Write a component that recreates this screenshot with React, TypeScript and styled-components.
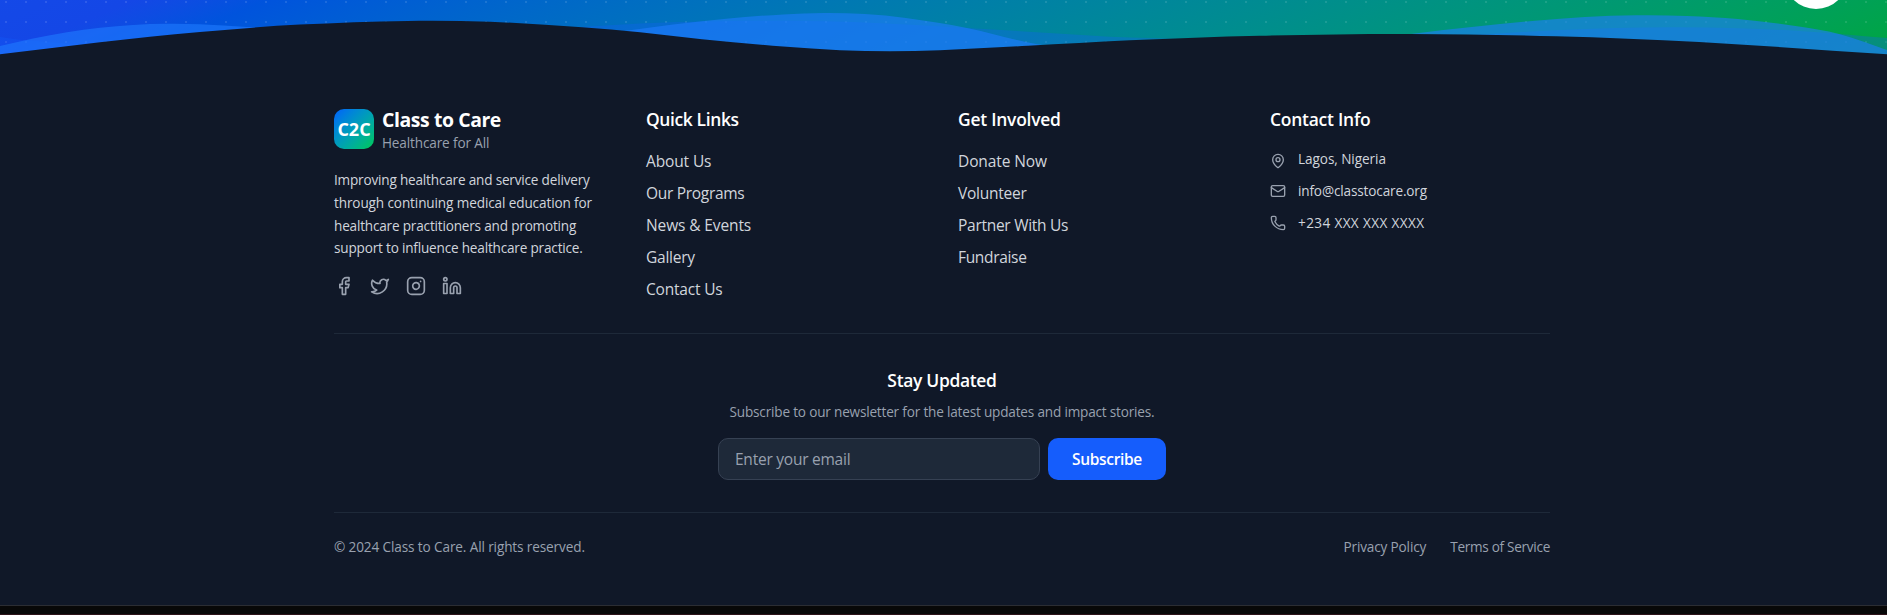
import React from "react";
import styled, { createGlobalStyle } from "styled-components";
import { Facebook, Twitter, Instagram, Linkedin, MapPin, Mail, Phone } from "lucide-react";

const GlobalStyle = createGlobalStyle`
  *, *::before, *::after { box-sizing: border-box; }
  body {
    margin: 0;
    background: #0a0a0a;
    font-family: "Segoe UI", "Open Sans", "Noto Sans", sans-serif;
    font-size: 16px;
    line-height: 24px;
    color: #fff;
    overflow: hidden;
  }
  h3, p, ul { margin: 0; padding: 0; }
  ul { list-style: none; }
  a { color: inherit; text-decoration: none; }
`;

const Page = styled.div`
  height: 615px;
  display: flex;
  flex-direction: column;
  overflow: hidden;
`;

const Hero = styled.section`
  position: relative;
  flex: none;
  height: 57px;
  overflow: hidden;
  background-image:
    radial-gradient(circle at 6px 2px, rgba(255, 255, 255, 0.11) 1.45px, transparent 1.5px),
    linear-gradient(to bottom right in oklab, #155dfc 0%, #1447e6 50%, #00a63e 100%);
  background-size: 20px 20px, 100% 800px;
  background-position: 0 0, left bottom;
  background-repeat: repeat, no-repeat;
`;

const Waves = styled.svg`
  display: block;
  width: 100%;
  height: 57px;
`;

const FloatingButton = styled.button`
  position: absolute;
  right: 39px;
  bottom: 48px;
  width: 64px;
  height: 64px;
  border: 0;
  border-radius: 50%;
  background: #fff;
`;

const FooterArea = styled.footer`
  flex: none;
  height: 548px;
  padding: 48px 3px 0 0;
  background: #101828;
`;

const Container = styled.div`
  width: 1216px;
  margin: 0 auto;
`;

const Columns = styled.div`
  display: grid;
  grid-template-columns: repeat(4, 1fr);
  gap: 32px;
`;

const Text = styled.span<{ $ls: number }>`
  font-size: 0.97em;
  letter-spacing: calc(${(p) => p.$ls}px + 0.014em);
  white-space: nowrap;
`;

const Brand = styled.div`
  display: flex;
  align-items: center;
  gap: 8px;
  margin-bottom: 16px;
`;

const Logo = styled.div`
  display: flex;
  align-items: center;
  justify-content: center;
  width: 40px;
  height: 40px;
  border-radius: 10px;
  background: linear-gradient(to bottom right in oklab, #155dfc, #00c950);
  font-size: 18px;
  font-weight: 700;
`;

const BrandName = styled.div`
  padding-top: 1px;
  height: 28px;
  font-size: 20px;
  line-height: 28px;
  font-weight: 700;
`;

const Muted = styled.div`
  font-size: 14px;
  line-height: 20px;
  color: #99a1af;
`;

const Description = styled.p`
  display: flex;
  flex-direction: column;
  font-size: 14px;
  line-height: 22.75px;
  color: #d1d5dc;
`;

const DescriptionLine = styled.span`
  display: block;
`;

const Socials = styled.div`
  display: flex;
  gap: 16px;
  margin-top: 16px;
  color: #99a1af;
  svg { display: block; }
`;

const Heading = styled.h3<{ $gap?: number }>`
  font-size: 18px;
  line-height: 28px;
  font-weight: 600;
  margin-bottom: ${(p) => p.$gap ?? 16}px;
`;

const LinkList = styled.ul`
  display: flex;
  flex-direction: column;
  gap: 8px;
  color: #d1d5dc;
`;

const ContactList = styled.ul`
  display: flex;
  flex-direction: column;
  gap: 12px;
  font-size: 14px;
  line-height: 20px;
  color: #d1d5dc;
`;

const ContactItem = styled.li<{ $top?: boolean }>`
  display: flex;
  align-items: ${(p) => (p.$top ? "flex-start" : "center")};
  gap: 12px;
  svg {
    color: #99a1af;
    margin-top: ${(p) => (p.$top ? 4 : 0)}px;
  }
`;

const Newsletter = styled.section`
  display: flex;
  flex-direction: column;
  align-items: center;
  margin-top: 32px;
  padding: 32px 0;
  border-top: 1px solid #1e2939;
`;

const Form = styled.form`
  display: flex;
  gap: 8px;
  width: 448px;
  height: 42px;
  margin-top: 16px;
`;

const EmailInput = styled.input`
  flex: 1;
  min-width: 0;
  padding: 0 16px;
  border: 1px solid #364153;
  border-radius: 10px;
  background: #1e2939;
  color: #fff;
  font: inherit;
  font-size: 15.5px;
  letter-spacing: -0.24px;
  &::placeholder { color: #99a1af; opacity: 1; }
`;

const SubscribeButton = styled.button`
  flex: none;
  width: 118px;
  padding: 0;
  border: 0;
  border-radius: 10px;
  background: #155dfc;
  color: #fff;
  font: inherit;
  font-weight: 600;
`;

const Legal = styled.div`
  display: flex;
  justify-content: space-between;
  padding-top: 24px;
  border-top: 1px solid #1e2939;
  font-size: 14px;
  line-height: 20px;
  color: #99a1af;
`;

const LegalLinks = styled.nav`
  display: flex;
  gap: 24px;
`;

const BottomEdge = styled.div`
  flex: 1;
  border-top: 1px solid #2b2d33;
  border-bottom: 1px solid #2c1218;
  background: #080808;
`;

type Point = [number, number];

// Smooth curve through the points, closed along the bottom of the section.
function wave(points: Point[]): string {
  let d = `M${points[0][0]},${points[0][1]}`;
  for (let i = 0; i < points.length - 1; i++) {
    const a = points[i - 1] ?? points[i];
    const b = points[i];
    const c = points[i + 1];
    const e = points[i + 2] ?? c;
    const h = (c[0] - b[0]) / 3;
    const mb = (c[1] - a[1]) / (c[0] - a[0]);
    const mc = (e[1] - b[1]) / (e[0] - b[0]);
    d += `C${b[0] + h},${b[1] + mb * h} ${c[0] - h},${c[1] - mc * h} ${c[0]},${c[1]}`;
  }
  return `${d}V60H0Z`;
}

const backWave = wave([
  [0, 37], [28, 40.5], [120, 46], [300, 45], [480, 34], [588, 26.5], [640, 23.4], [702, 21.4],
  [783, 20.8], [865, 22.5], [967, 28], [1049, 33], [1130, 37.5], [1300, 41], [1400, 38.5],
  [1494, 33.7], [1555, 30.3], [1616, 28], [1677, 27.3], [1738, 28.3], [1799, 31], [1887, 38],
]);

const middleWave = wave([
  [0, 46], [33, 38.6], [67, 32.2], [100, 27.8], [133, 24.9], [167, 23.8], [200, 24.3], [247, 27],
  [340, 34], [460, 40], [560, 37], [628, 30.6], [673, 24.6], [726, 18.7], [783, 14.4], [824, 13],
  [865, 14], [906, 18], [967, 28], [1036, 44], [1120, 54], [1260, 52], [1413, 33.7], [1474, 26.8],
  [1535, 20.8], [1585, 17], [1636, 15.3], [1687, 15.9], [1738, 19], [1799, 26.5], [1839, 34], [1887, 50],
]);

const frontWave = wave([
  [0, 54.3], [100, 42.3], [200, 32], [300, 24.6], [408, 20.9], [490, 21.8], [582, 27.3], [640, 32.3],
  [702, 39.2], [783, 46.6], [840, 50.2], [890, 51.2], [940, 50.2], [1028, 45.8], [1130, 40.3],
  [1260, 35.8], [1409, 34], [1556, 36.2], [1699, 42], [1887, 54.3],
]);

type Label = { label: string; ls: number };

const quickLinks: Label[] = [
  { label: "About Us", ls: -0.35 },
  { label: "Our Programs", ls: -0.53 },
  { label: "News & Events", ls: -0.34 },
  { label: "Gallery", ls: -0.47 },
  { label: "Contact Us", ls: -0.42 },
];

const involvedLinks: Label[] = [
  { label: "Donate Now", ls: -0.34 },
  { label: "Volunteer", ls: -0.47 },
  { label: "Partner With Us", ls: -0.5 },
  { label: "Fundraise", ls: -0.55 },
];

const description: Label[] = [
  { label: "Improving healthcare and service delivery", ls: -0.38 },
  { label: "through continuing medical education for", ls: -0.31 },
  { label: "healthcare practitioners and promoting", ls: -0.38 },
  { label: "support to influence healthcare practice.", ls: -0.38 },
];

function Links({ items }: { items: Label[] }) {
  return (
    <LinkList>
      {items.map((item) => (
        <li key={item.label}>
          <Text as="a" $ls={item.ls}>{item.label}</Text>
        </li>
      ))}
    </LinkList>
  );
}

export default function App() {
  return (
    <Page>
      <GlobalStyle />
      <Hero>
        <Waves viewBox="0 0 1887 57" preserveAspectRatio="none">
          <path d={backWave} fill="#155dfc" fillOpacity="0.3" />
          <path d={middleWave} fill="#207bff" fillOpacity="0.6" />
          <path d={frontWave} fill="#101828" />
        </Waves>
        <FloatingButton aria-label="Scroll to top" />
      </Hero>
      <FooterArea>
        <Container>
          <Columns>
            <div>
              <Brand>
                <Logo>C2C</Logo>
                <div>
                  <BrandName><Text $ls={-0.67}>Class to Care</Text></BrandName>
                  <Muted><Text $ls={-0.33}>Healthcare for All</Text></Muted>
                </div>
              </Brand>
              <Description>
                {description.map((line) => (
                  <DescriptionLine key={line.label}>
                    <Text $ls={line.ls}>{line.label}</Text>
                  </DescriptionLine>
                ))}
              </Description>
              <Socials>
                <Facebook size={20} />
                <Twitter size={20} />
                <Instagram size={20} />
                <Linkedin size={20} />
              </Socials>
            </div>
            <div>
              <Heading><Text $ls={-0.62}>Quick Links</Text></Heading>
              <Links items={quickLinks} />
            </div>
            <div>
              <Heading><Text $ls={-0.48}>Get Involved</Text></Heading>
              <Links items={involvedLinks} />
            </div>
            <div>
              <Heading><Text $ls={-0.48}>Contact Info</Text></Heading>
              <ContactList>
                <ContactItem $top>
                  <MapPin size={16} />
                  <Text $ls={-0.26}>Lagos, Nigeria</Text>
                </ContactItem>
                <ContactItem>
                  <Mail size={16} />
                  <Text $ls={-0.34}>info@classtocare.org</Text>
                </ContactItem>
                <ContactItem>
                  <Phone size={16} />
                  <Text $ls={0.18}>+234 XXX XXX XXXX</Text>
                </ContactItem>
              </ContactList>
            </div>
          </Columns>
          <Newsletter>
            <Heading $gap={8}><Text $ls={-0.56}>Stay Updated</Text></Heading>
            <Muted>
              <Text $ls={-0.375}>
                Subscribe to our newsletter for the latest updates and impact stories.
              </Text>
            </Muted>
            <Form>
              <EmailInput type="email" placeholder="Enter your email" />
              <SubscribeButton type="button"><Text $ls={-0.56}>Subscribe</Text></SubscribeButton>
            </Form>
          </Newsletter>
          <Legal>
            <Text $ls={-0.31}>© 2024 Class to Care. All rights reserved.</Text>
            <LegalLinks>
              <Text as="a" $ls={-0.34}>Privacy Policy</Text>
              <Text as="a" $ls={-0.48}>Terms of Service</Text>
            </LegalLinks>
          </Legal>
        </Container>
      </FooterArea>
      <BottomEdge />
    </Page>
  );
}
